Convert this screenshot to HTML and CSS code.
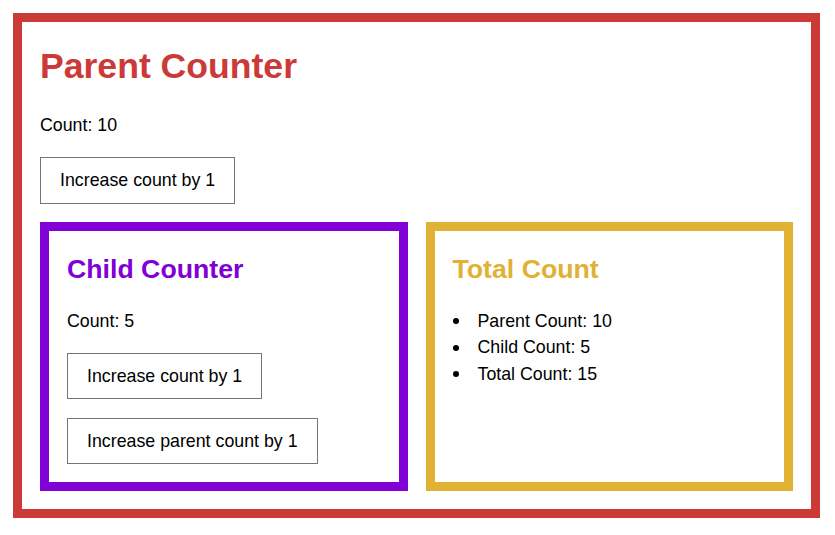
FILE: index.html
```html
<!DOCTYPE html>
<html lang="en">
<head>
<meta charset="utf-8">
<title>Parent Counter</title>
<link rel="stylesheet" href="styles.css">
</head>
<body>
  <div class="panel panel-parent">
    <h1 class="title title-parent">Parent Counter</h1>
    <p class="count">Count: 10</p>
    <button class="btn" type="button">Increase count by 1</button>
    <div class="row">
      <div class="panel panel-child">
        <h2 class="subtitle title-child">Child Counter</h2>
        <p class="count">Count: 5</p>
        <button class="btn" type="button">Increase count by 1</button>
        <button class="btn" type="button">Increase parent count by 1</button>
      </div>
      <div class="panel panel-total">
        <h2 class="subtitle title-total">Total Count</h2>
        <ul class="totals">
          <li>Parent Count: 10</li>
          <li>Child Count: 5</li>
          <li>Total Count: 15</li>
        </ul>
      </div>
    </div>
  </div>
</body>
</html>
```
FILE: styles.css
```css
html, body {
  background: #ffffff;
}

body {
  margin: 13px 15px 17px 13px;
  font-family: "Liberation Sans", Arial, Helvetica, sans-serif;
  font-size: 17.8px;
  line-height: 1.5;
  color: #000000;
}

.panel {
  display: flex;
  flex-direction: column;
  align-items: flex-start;
  gap: 18.5px;
  padding: 18px;
  border: 9px solid;
  box-sizing: border-box;
}

.panel-parent {
  border-color: #cc3a38;
}

.panel-child {
  border-color: #8000d6;
}

.panel-total {
  border-color: #e1b133;
}

.title,
.subtitle,
.count,
.totals {
  margin: 0;
}

.title {
  font-size: 35.6px;
  font-weight: bold;
  line-height: 1.5;
}

.subtitle {
  font-size: 26.7px;
  font-weight: bold;
  line-height: 1.5;
}

.title-parent {
  color: #cc3a38;
}

.title-child {
  color: #8000d6;
}

.title-total {
  color: #e1b133;
}

.btn {
  font-family: inherit;
  font-size: 17.8px;
  line-height: 1.5;
  color: #000000;
  background: #ffffff;
  border: 1px solid #767676;
  border-radius: 0;
  padding: 8.9px 19px;
  margin: 0;
  cursor: pointer;
}

.row {
  align-self: stretch;
  display: flex;
  gap: 18px;
}

.row > .panel {
  flex: 1 1 0;
  min-width: 0;
}

.totals {
  padding: 0;
  list-style: none;
}

.totals li {
  display: flex;
  align-items: center;
  gap: 19px;
}

.totals li::before {
  content: "";
  width: 6px;
  height: 6px;
  border-radius: 50%;
  background: #000000;
  flex: none;
}
```
